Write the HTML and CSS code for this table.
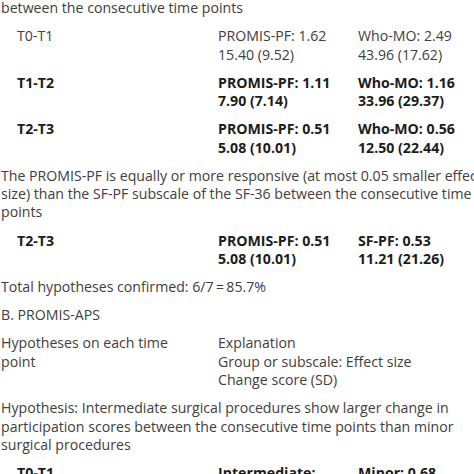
FILE: index.html
```html
<!DOCTYPE html>
<html lang="en">
<head>
<meta charset="utf-8">
<title>PROMIS hypotheses</title>
<link rel="stylesheet" href="styles.css">
</head>
<body>
<div class="page">
  <p class="para">between the consecutive time points</p>

  <div class="row">
    <div class="c1">T0-T1</div>
    <div class="c2">PROMIS-PF: 1.62<br>15.40 (9.52)</div>
    <div class="c3">Who-MO: 2.49<br>43.96 (17.62)</div>
  </div>
  <div class="row bold">
    <div class="c1">T1-T2</div>
    <div class="c2">PROMIS-PF: 1.11<br>7.90 (7.14)</div>
    <div class="c3">Who-MO: 1.16<br>33.96 (29.37)</div>
  </div>
  <div class="row bold">
    <div class="c1">T2-T3</div>
    <div class="c2">PROMIS-PF: 0.51<br>5.08 (10.01)</div>
    <div class="c3">Who-MO: 0.56<br>12.50 (22.44)</div>
  </div>

  <p class="para">The PROMIS-PF is equally or more responsive (at most 0.05 smaller effect<br>size) than the SF-PF subscale of the SF-36 between the consecutive time<br>points</p>

  <div class="row bold">
    <div class="c1">T2-T3</div>
    <div class="c2">PROMIS-PF: 0.51<br>5.08 (10.01)</div>
    <div class="c3">SF-PF: 0.53<br>11.21 (21.26)</div>
  </div>

  <p class="para">Total hypotheses confirmed: 6/7&#8201;=&#8201;85.7%</p>
  <p class="para">B. PROMIS-APS</p>

  <div class="row head">
    <div class="h1">Hypotheses on each time<br>point</div>
    <div class="h2">Explanation<br>Group or subscale: Effect size<br>Change score (SD)</div>
  </div>

  <p class="para">Hypothesis: Intermediate surgical procedures show larger change in<br>participation scores between the consecutive time points than minor<br>surgical procedures</p>

  <div class="row bold">
    <div class="c1">T0-T1</div>
    <div class="c2">Intermediate:<br>&nbsp;</div>
    <div class="c3">Minor: 0.68<br>&nbsp;</div>
  </div>
</div>
</body>
</html>
```

FILE: styles.css
```css
html, body {
  margin: 0;
  padding: 0;
  background: #ffffff;
}

body {
  font-family: "Open Sans", "Noto Sans", sans-serif;
  font-size: 14.15px;
  line-height: 18.4px;
  color: #404040;
  overflow: hidden;
  width: 474px;
  height: 474px;
}

.page {
  padding: 0 0 0 1px;
  margin-top: -1px;
}

.para {
  margin: 0 0 9.7px 0;
  white-space: nowrap;
}

.row {
  display: grid;
  grid-template-columns: 201px 140px 1fr;
  padding-left: 16px;
  margin-bottom: 9.7px;
  white-space: nowrap;
}

.row.bold {
  font-weight: 700;
  color: #1c1c1c;
}

.row.head {
  grid-template-columns: 217px 1fr;
  padding-left: 0;
}
```
